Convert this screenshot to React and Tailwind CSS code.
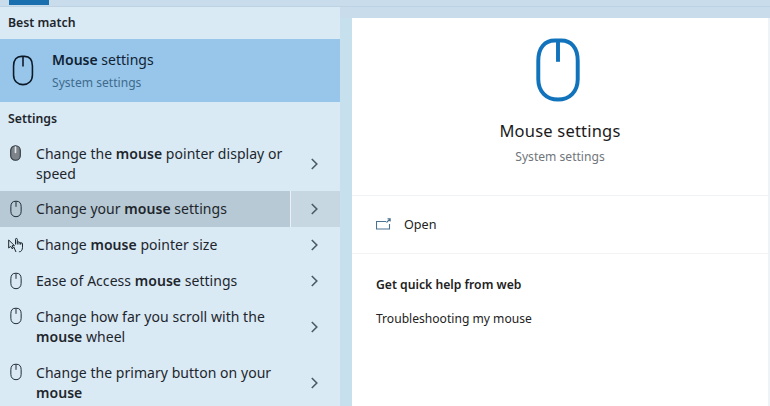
const MOUSE_PATH = "M1 7.2C1 3.2 3 1 6 1h2c3 0 5 2.2 5 6.2v5.6c0 3.8-2.5 6.2-6 6.2s-6-2.4-6-6.2z";

function MouseIcon({ className = "", stroke = "#1f2a33", w = 1.2 }) {
  return (
    <svg viewBox="0 0 14 20" fill="none" className={className}>
      <path d={MOUSE_PATH} stroke={stroke} strokeWidth={w} />
      <path d="M7 1v6.5" stroke={stroke} strokeWidth={w} />
    </svg>
  );
}

function Chevron() {
  return (
    <svg viewBox="0 0 7 12" fill="none" className="w-[7px] h-[12px]">
      <path d="M.8 1 5.8 6l-5 5" stroke="#4d5a63" strokeWidth="1.6" />
    </svg>
  );
}

function FilledMouse() {
  return (
    <svg viewBox="0 0 11 16" className="w-[11px] h-[16px]" fill="none">
      <rect x=".7" y=".7" width="9.6" height="14.6" rx="4.6" fill="#7c8489" stroke="#2e363c" strokeWidth="1.1" />
      <path d="M5.5 2v5.5" stroke="#dfe8ee" strokeWidth="1.6" strokeLinecap="round" />
    </svg>
  );
}

function HandIcon() {
  return (
    <svg viewBox="0 0 16 15" className="w-[16px] h-[15px]" fill="none" stroke="#1c262d" strokeWidth="1">
      <path d="M.7 2.5v8l2-1.7 1.3 2.4 1.3-.7-1.2-2.3h2.4z" />
      <path d="M8 14.5 5.8 9.5M7.5 7V1.8a.9.9 0 0 1 1.8 0V7m0-2.2a.9.9 0 0 1 1.7 0V7m0-1.6a.9.9 0 0 1 1.7 0V7.2m0-1a.9.9 0 0 1 1.8 0v3.6c0 2.8-1.4 4.6-3.6 4.7" />
    </svg>
  );
}

function ResultRow({ icon, children, height, hover, top, topPad = "pt-[7px]" }) {
  return (
    <div className={`flex ${height} ${hover ? "bg-[#b6c9d4]" : ""}`}>
      <div className={`flex flex-1 min-w-0 pl-[36px] relative ${top ? topPad : "items-center"}`}>
        <span className={`absolute left-[7px] w-[17px] flex justify-center ${top ? "top-[8px]" : "top-1/2 -translate-y-1/2"}`}>
          {icon}
        </span>
        <p className="text-[14px] leading-[20px] text-[#1e262c] tracking-[0.04px]">{children}</p>
      </div>
      <div className={`w-[50px] shrink-0 flex items-center justify-center pr-[2px] ${hover ? "bg-[#c6d7e2] border-l border-[#eaf2f7]" : ""}`}>
        <Chevron />
      </div>
    </div>
  );
}

const smallMouse = <MouseIcon className="w-[12px] h-[18px]" w={1.15} />;

export default function App() {
  return (
    <div
      className="w-[770px] h-[406px] overflow-hidden flex flex-col bg-[#c8dcec]"
      style={{ fontFamily: '"Noto Sans", sans-serif' }}
    >
      <div className="h-[7px] shrink-0 pl-[9px] border-b border-[#bdd3e4]">
        <div className="w-[40px] h-[5px] bg-[#1a6fae]" />
      </div>
      <div className="flex flex-1 min-h-0">
        <div className="w-[340px] shrink-0 bg-[#d9eaf5]">
          <div className="h-[32px] flex items-center pl-[8px] text-[12.3px] font-semibold text-[#1e262c]">Best match</div>
          <div className="h-[63px] bg-[#98c6ea] flex items-center pl-[12px] gap-[18px]">
            <MouseIcon className="w-[22px] h-[33px]" stroke="#0c1a28" w={1} />
            <div>
              <div className="text-[14px] leading-[22px] text-[#0f2233]"><span className="font-semibold">Mouse</span> settings</div>
              <div className="text-[12.1px] leading-[20px] mt-[2px] text-[#3e6b8d]">System settings</div>
            </div>
          </div>
          <div className="h-[35px] flex items-center pl-[8px] text-[12.3px] font-semibold text-[#1e262c]">Settings</div>
          <ResultRow height="h-[54px]" top icon={<FilledMouse />}>
            Change the <b className="font-semibold">mouse</b> pointer display or speed
          </ResultRow>
          <ResultRow height="h-[36px]" hover icon={smallMouse}>
            Change your <b className="font-semibold">mouse</b> settings
          </ResultRow>
          <ResultRow height="h-[36px]" icon={<HandIcon />}>
            Change <b className="font-semibold">mouse</b> pointer size
          </ResultRow>
          <ResultRow height="h-[36px]" icon={smallMouse}>
            Ease of Access <b className="font-semibold">mouse</b> settings
          </ResultRow>
          <ResultRow height="h-[56px]" top topPad="pt-[8px]" icon={smallMouse}>
            Change how far you scroll with the <b className="font-semibold">mouse</b> wheel
          </ResultRow>
          <ResultRow height="h-[56px]" top topPad="pt-[8px]" icon={smallMouse}>
            Change the primary button on your <b className="font-semibold">mouse</b>
          </ResultRow>
        </div>
        <div className="flex-1 flex flex-col">
          <div className="h-[11px] shrink-0 bg-[#c8dcec]" />
          <div className="flex flex-1 min-h-0 bg-[#c6e0ee]">
            <div className="w-[12px] shrink-0" />
            <div className="flex-1 bg-white">
              <div className="h-[178px] flex flex-col items-center border-b border-[#f0f2f3]">
                <MouseIcon className="w-[46px] h-[66px] mt-[19px] -translate-x-[2px]" stroke="#1173bb" w={1.2} />
                <div className="mt-[16px] text-[16.5px] leading-[24px] text-[#1b1b1b] tracking-[0.2px]">Mouse settings</div>
                <div className="mt-[4px] text-[12.1px] leading-[20px] text-[#70767b]">System settings</div>
              </div>
              <div className="h-[58px] flex items-center pl-[24px] gap-[13px] border-b border-[#f0f2f3] pt-[2px]">
                <svg viewBox="0 0 15 12" className="w-[15px] h-[12px] -mt-[4px]" fill="none" stroke="#4a7391" strokeWidth="1.1">
                  <path d="M10 3.5H.5v7.5h13V6" />
                  <path d="M10.5 4.5 14 1M11.5.8H14.2V3.5" />
                </svg>
                <span className="text-[12.6px] text-[#222]">Open</span>
              </div>
              <div className="pl-[24px] pt-[21px] text-[12.2px] font-semibold leading-[20px] text-[#222]">Get quick help from web</div>
              <div className="pl-[24px] mt-[14px] text-[12.1px] leading-[20px] text-[#222]">Troubleshooting my mouse</div>
            </div>
            <div className="w-[2px] shrink-0 bg-[#eef3f7]" />
          </div>
        </div>
      </div>
    </div>
  );
}
